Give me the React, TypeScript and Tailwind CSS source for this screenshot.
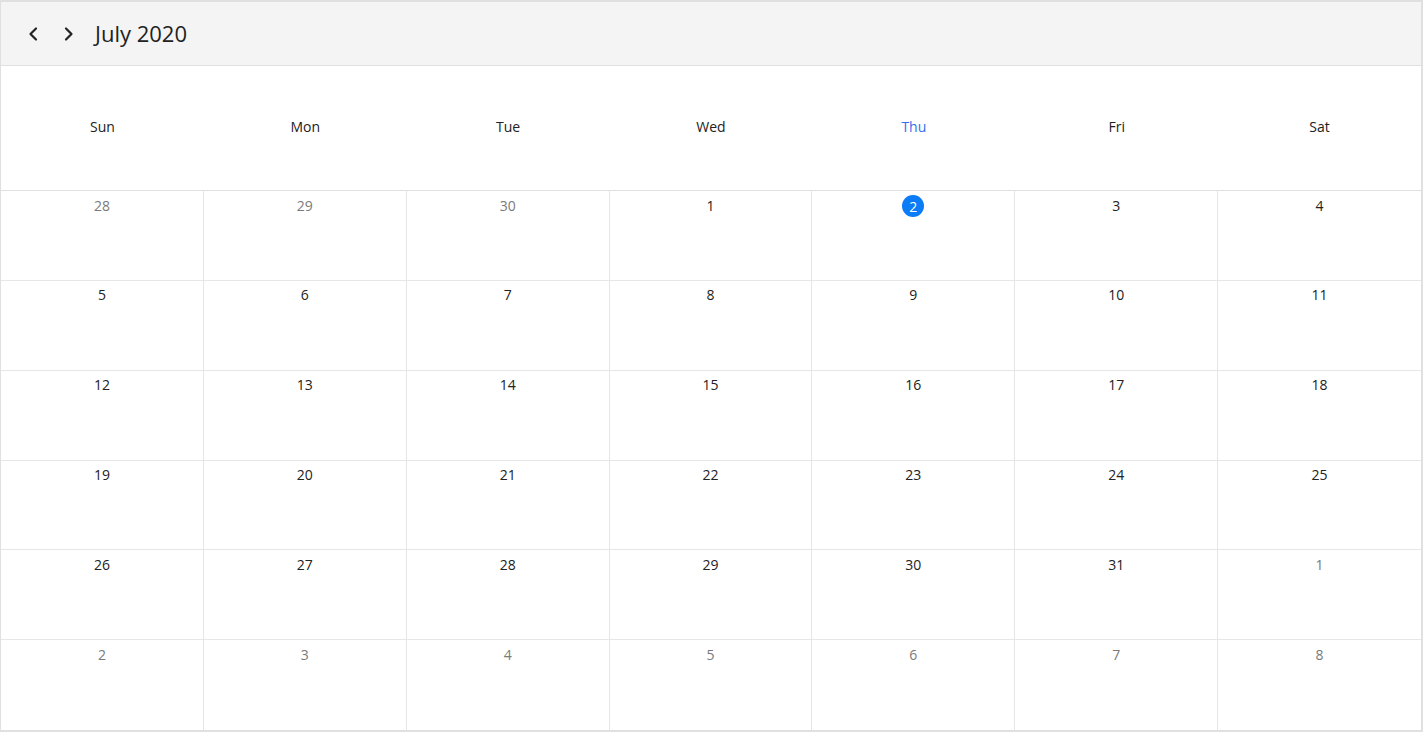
import { useMemo } from 'react';

const dayNames = ['Sun', 'Mon', 'Tue', 'Wed', 'Thu', 'Fri', 'Sat'];

interface DayCell {
  day: number;
  inMonth: boolean;
  today: boolean;
}

function buildWeeks(): DayCell[][] {
  // July 2020 starts on Wednesday, shown with 6 rows
  const cells: DayCell[] = [];
  [28, 29, 30].forEach((d) => cells.push({ day: d, inMonth: false, today: false }));
  for (let d = 1; d <= 31; d++) cells.push({ day: d, inMonth: true, today: d === 2 });
  let next = 1;
  while (cells.length < 42) cells.push({ day: next++, inMonth: false, today: false });
  const weeks: DayCell[][] = [];
  for (let i = 0; i < 42; i += 7) weeks.push(cells.slice(i, i + 7));
  return weeks;
}

function Chevron({ dir }: { dir: 'left' | 'right' }) {
  return (
    <svg width="14" height="16" viewBox="0 0 14 16" fill="none">
      <path
        d={dir === 'left' ? 'M10 2.5 L4.5 8 L10 13.5' : 'M4 2.5 L9.5 8 L4 13.5'}
        stroke="#222"
        strokeWidth="2.2"
        strokeLinecap="round"
        strokeLinejoin="round"
      />
    </svg>
  );
}

export default function App() {
  const weeks = useMemo(buildWeeks, []);

  return (
    <div
      className="w-[1423px] h-[732px] bg-white"
      style={{ fontFamily: '"Open Sans", "Noto Sans", sans-serif' }}
    >
      <div className="h-full flex flex-col border-t-2 border-r-2 border-b-2 border-l border-[#e0e0e0]">
        {/* Toolbar */}
        <div className="h-[64px] flex items-center bg-[#f4f4f4] border-b border-[#e0e0e0] pl-[24px]">
          <button className="w-[16px] h-[20px] flex items-center justify-center">
            <Chevron dir="left" />
          </button>
          <button className="ml-[20px] w-[16px] h-[20px] flex items-center justify-center">
            <Chevron dir="right" />
          </button>
          <span className="ml-[18px] text-[22px] text-[#222] leading-none pb-[1px]">July 2020</span>
        </div>

        {/* Day names */}
        <div className="h-[125px] grid grid-cols-7 border-b border-[#e0e0e0]">
          {dayNames.map((name) => (
            <div
              key={name}
              className={`flex items-center justify-center pb-[4px] text-[14px] ${
                name === 'Thu' ? 'text-[#2f6ff0]' : 'text-[#222]'
              }`}
            >
              {name}
            </div>
          ))}
        </div>

        {/* Weeks */}
        <div className="flex-1 grid grid-rows-6">
          {weeks.map((week, wi) => (
            <div
              key={wi}
              className={`grid grid-cols-7 ${wi < 5 ? 'border-b border-[#e6e6e6]' : ''}`}
            >
              {week.map((cell, ci) => (
                <div
                  key={ci}
                  className={`flex justify-center pt-[4px] ${ci < 6 ? 'border-r border-[#e6e6e6]' : ''}`}
                >
                  {cell.today ? (
                    <span className="w-[22px] h-[22px] rounded-full bg-[#0a7cf7] text-white text-[14px] flex items-center justify-center">
                      {cell.day}
                    </span>
                  ) : (
                    <span
                      className={`h-[20px] flex items-center text-[14px] ${
                        cell.inMonth ? 'text-[#222]' : 'text-[#7a7a7a]'
                      }`}
                    >
                      {cell.day}
                    </span>
                  )}
                </div>
              ))}
            </div>
          ))}
        </div>
      </div>
    </div>
  );
}
